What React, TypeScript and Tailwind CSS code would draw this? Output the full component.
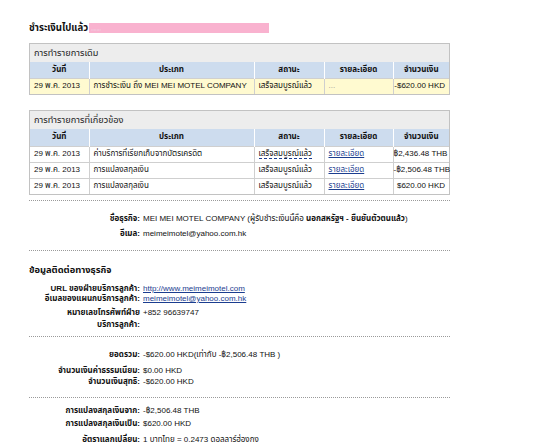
import React from "react";

const FONT = "font-['Liberation_Sans','Noto_Sans_Thai','Loma','Garuda','DejaVu_Sans',sans-serif]";

function Row({ label, children, h, mt, lines }: { label: React.ReactNode; children: React.ReactNode; h: string; mt: string; lines?: boolean }) {
  return (
    <div className={`flex ${h} ${mt} ${lines ? "items-start" : "items-center"}`}>
      <div className="w-[111px] shrink-0 text-right font-bold leading-[12px] whitespace-nowrap">{label}</div>
      <div className="pl-[3px] leading-[12px] whitespace-nowrap">{children}</div>
    </div>
  );
}

const Dotted = ({ mt }: { mt: string }) => (
  <div className={`${mt} w-[421px] border-t border-dotted border-[#9a9a9a]`} />
);

const th = "border-l border-white first:border-l-0 font-bold text-center p-0 leading-[12px] whitespace-nowrap";
const td = "border-l border-[#cfcfcf] first:border-l-0 p-0 px-[4px] leading-[12px] whitespace-nowrap overflow-hidden";
const amt = "border-l border-[#cfcfcf] p-0 pr-[4px] text-right leading-[12px] whitespace-nowrap";

export default function App() {
  return (
    <div className={`w-[539px] h-[446px] bg-white overflow-hidden text-[8px] leading-[12px] text-[#111] ${FONT}`}>
      <div className="pl-[29px] pt-[22px]">
        <div className="flex items-center h-[12px]">
          <span className="font-bold text-[9.6px]">ชำระเงินไปแล้ว</span>
          <span className="ml-[1px] w-[180px] h-[10px] bg-[#f9b2cf] text-[5px] text-[#e9e9f5] leading-[10px] pl-[2px]">,,,,,,,</span>
        </div>

        {/* Table 1 */}
        <div className="mt-[9px] w-[421px] border border-[#c2c2c2]">
          <div className="h-[18px] bg-[#ededed] flex items-center px-[4px] text-[9.2px] text-[#222]">การทำรายการเดิม</div>
          <table className="w-full border-collapse table-fixed">
            <colgroup>
              <col className="w-[59px]" />
              <col className="w-[165px]" />
              <col className="w-[70px]" />
              <col className="w-[69px]" />
              <col />
            </colgroup>
            <thead>
              <tr className="h-[16px] bg-[#cddcee]">
                <th className={th}>วันที่</th>
                <th className={th}>ประเภท</th>
                <th className={th}>สถานะ</th>
                <th className={th}>รายละเอียด</th>
                <th className={th}>จำนวนเงิน</th>
              </tr>
            </thead>
            <tbody>
              <tr className="h-[16px] bg-[#fffad0] border-t border-[#cfcfcf]">
                <td className={td}>29 พ.ค. 2013</td>
                <td className={td}>การชำระเงิน ถึง MEI MEI MOTEL COMPANY</td>
                <td className={td}>เสร็จสมบูรณ์แล้ว</td>
                <td className={`${td} text-[#999]`}>...</td>
                <td className={amt}>-$620.00 HKD</td>
              </tr>
            </tbody>
          </table>
        </div>

        {/* Table 2 */}
        <div className="mt-[15px] w-[421px] border border-[#c2c2c2]">
          <div className="h-[18px] bg-[#ededed] flex items-center px-[4px] text-[9.2px] text-[#222]">การทำรายการที่เกี่ยวข้อง</div>
          <table className="w-full border-collapse table-fixed">
            <colgroup>
              <col className="w-[59px]" />
              <col className="w-[165px]" />
              <col className="w-[70px]" />
              <col className="w-[69px]" />
              <col />
            </colgroup>
            <thead>
              <tr className="h-[17px] bg-[#cddcee]">
                <th className={th}>วันที่</th>
                <th className={th}>ประเภท</th>
                <th className={th}>สถานะ</th>
                <th className={th}>รายละเอียด</th>
                <th className={th}>จำนวนเงิน</th>
              </tr>
            </thead>
            <tbody>
              <tr className="h-[16px] border-t border-[#cfcfcf]">
                <td className={td}>29 พ.ค. 2013</td>
                <td className={td}>ค่าบริการที่เรียกเก็บจากบัตรเครดิต</td>
                <td className={td}><span className="border-b border-dashed border-[#1b3d8f] text-[#111]">เสร็จสมบูรณ์แล้ว</span></td>
                <td className={td}><span className="underline text-[#1b3d8f]">รายละเอียด</span></td>
                <td className={amt}>฿2,436.48 THB</td>
              </tr>
              <tr className="h-[16px] border-t border-[#cfcfcf]">
                <td className={td}>29 พ.ค. 2013</td>
                <td className={td}>การแปลงสกุลเงิน</td>
                <td className={td}>เสร็จสมบูรณ์แล้ว</td>
                <td className={td}><span className="underline text-[#1b3d8f]">รายละเอียด</span></td>
                <td className={amt}>-฿2,506.48 THB</td>
              </tr>
              <tr className="h-[16px] border-t border-[#cfcfcf]">
                <td className={td}>29 พ.ค. 2013</td>
                <td className={td}>การแปลงสกุลเงิน</td>
                <td className={td}>เสร็จสมบูรณ์แล้ว</td>
                <td className={td}><span className="underline text-[#1b3d8f]">รายละเอียด</span></td>
                <td className={amt}>$620.00 HKD</td>
              </tr>
            </tbody>
          </table>
        </div>

        <Dotted mt="mt-[5px]" />

        <Row label="ชื่อธุรกิจ:" h="h-[16px]" mt="mt-[10px]">
          MEI MEI MOTEL COMPANY (ผู้รับชำระเงินนี้คือ <b>นอกสหรัฐฯ - ยืนยันตัวตนแล้ว</b>)
        </Row>
        <Row label="อีเมล:" h="h-[14px]" mt="mt-0">meimeimotel@yahoo.com.hk</Row>

        <Dotted mt="mt-[9px]" />

        <div className="mt-[13px] h-[12px] flex items-center font-bold text-[9.3px]">ข้อมูลติดต่อทางธุรกิจ</div>

        <Row label="URL ของฝ่ายบริการลูกค้า:" h="h-[10px]" mt="mt-[8px]">
          <span className="underline text-[#1b3d8f]">http://www.meimeimotel.com</span>
        </Row>
        <Row label="อีเมลของแผนกบริการลูกค้า:" h="h-[10px]" mt="mt-0">
          <span className="underline text-[#1b3d8f]">meimeimotel@yahoo.com.hk</span>
        </Row>
        <Row label={<>หมายเลขโทรศัพท์ฝ่าย<br />บริการลูกค้า:</>} h="h-[24px]" mt="mt-[3px]" lines>
          +852 96639747
        </Row>

        <Dotted mt="mt-[5px]" />

        <Row label="ยอดรวม:" h="h-[14px]" mt="mt-[11px]">-$620.00 HKD(เท่ากับ -฿2,506.48 THB )</Row>
        <Row label="จำนวนเงินค่าธรรมเนียม:" h="h-[12px]" mt="mt-[3px]">$0.00 HKD</Row>
        <Row label="จำนวนเงินสุทธิ:" h="h-[10px]" mt="mt-0">-$620.00 HKD</Row>

        <Dotted mt="mt-[10px]" />

        <Row label="การแปลงสกุลเงินจาก:" h="h-[12px]" mt="mt-[7px]">-฿2,506.48 THB</Row>
        <Row label="การแปลงสกุลเงินเป็น:" h="h-[12px]" mt="mt-[1px]">$620.00 HKD</Row>
        <Row label="อัตราแลกเปลี่ยน:" h="h-[12px]" mt="mt-[4px]">1 บาทไทย = 0.2473 ดอลลาร์ฮ่องกง</Row>
      </div>
    </div>
  );
}
